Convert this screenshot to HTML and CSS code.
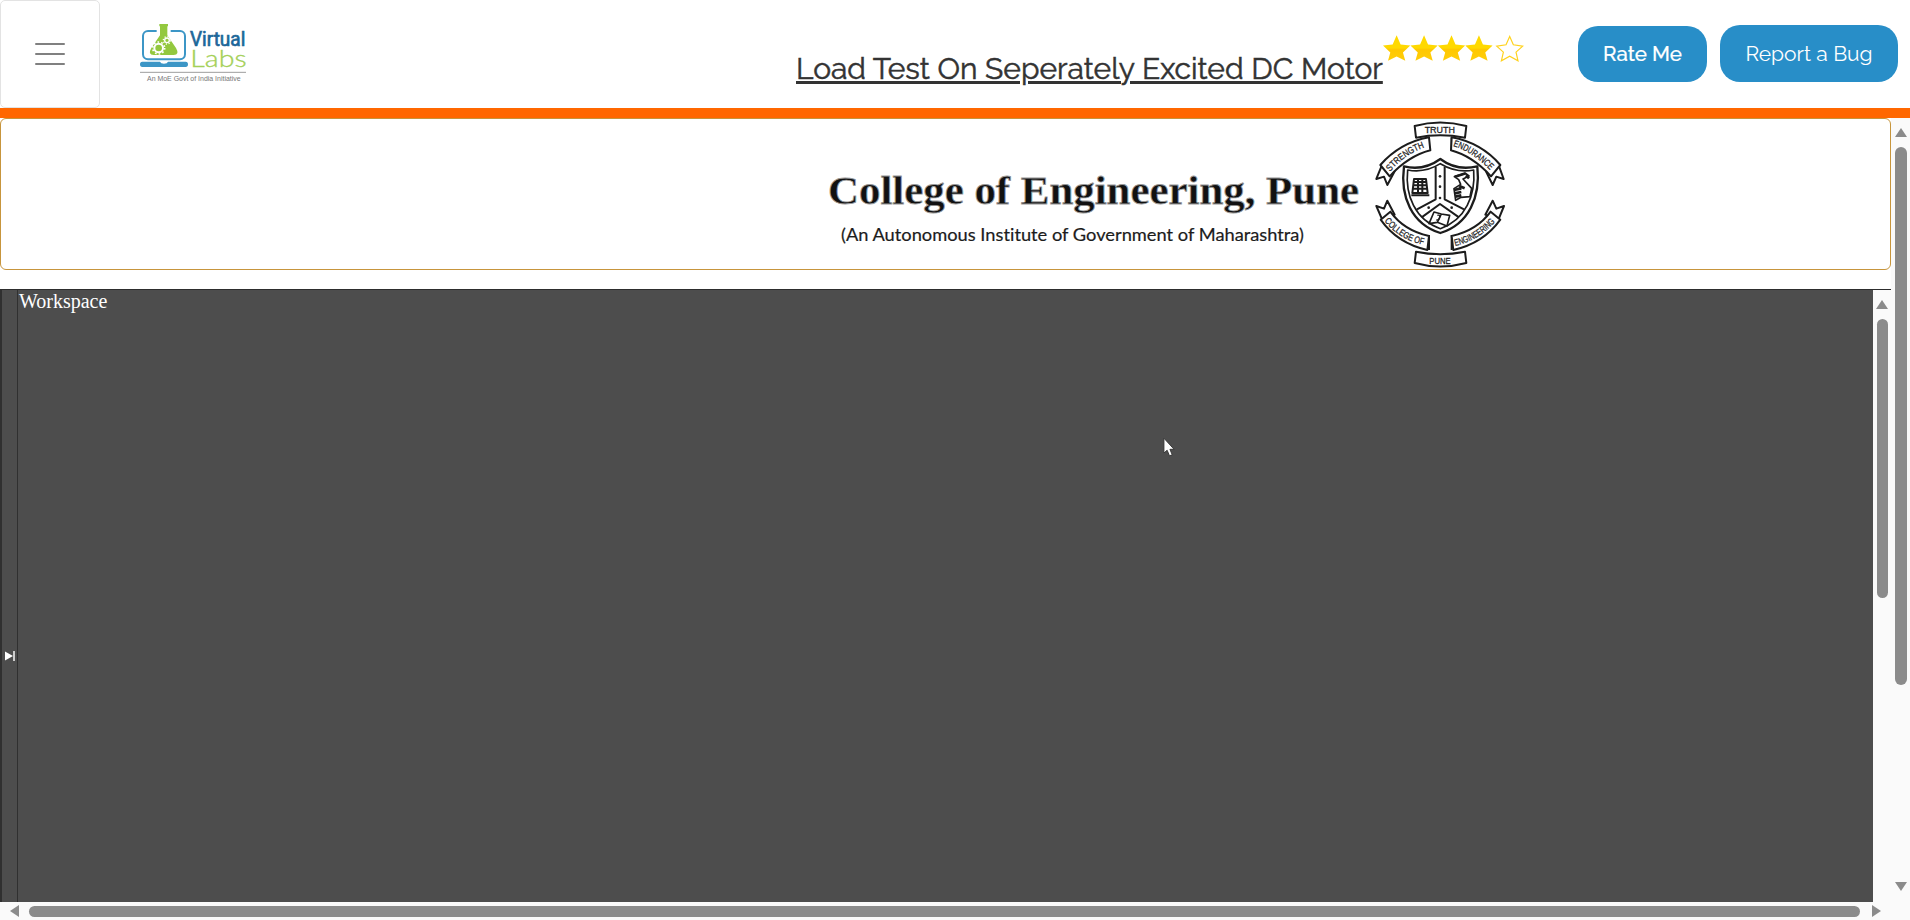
FILE: index.html
```html
<!DOCTYPE html>
<html lang="en">
<head>
<meta charset="utf-8">
<title>Virtual Labs</title>
<link rel="stylesheet" href="styles.css">
</head>
<body>
<header class="header">
  <button class="menu" aria-label="Menu"><span></span><span></span><span></span></button>
  <svg class="logo" viewBox="414 66 330 186">
    <rect x="429" y="93" width="126" height="85" rx="15" fill="none" stroke="#3c96c6" stroke-width="6"/>
    <path d="M470 86h42v16h-42z" fill="#fff"/>
    <path d="M478 72h26v7h-2v27l26 38q12 21-7 21h-60q-19 0-7-21l26-38V79h-2z" fill="#93c83e"/>
    <g fill="none" stroke="#fff">
      <circle cx="476" cy="144" r="13" stroke-width="6"/>
      <circle cx="476" cy="144" r="18" stroke-width="5" stroke-dasharray="5 6.3"/>
      <circle cx="501" cy="121" r="7" stroke-width="4"/>
      <circle cx="501" cy="121" r="11" stroke-width="4" stroke-dasharray="3.5 5.1"/>
    </g>
    <path d="M427 185h53q2 6 12 6t12-6h53q7 0 7 8t-7 8H427q-7 0-7-8t7-8z" fill="#3c96c6"/>
    <text x="570" y="137" class="logo-virtual" textLength="166" lengthAdjust="spacingAndGlyphs">Virtual</text>
    <text x="571" y="200" class="logo-labs" textLength="169" lengthAdjust="spacingAndGlyphs">Labs</text>
    <path d="M420 217h318" stroke="#8a8a8a" stroke-width="2.5"/>
    <text x="441" y="243" class="logo-tag" textLength="281" lengthAdjust="spacingAndGlyphs">An MoE Govt of India Initiative</text>
  </svg>
  <h1 class="title">Load Test On Seperately Excited DC Motor</h1>
  <svg class="stars" viewBox="669 104 424 80">
    <defs>
      <linearGradient id="gold" x2="0" y2="1"><stop offset=".5" stop-color="#ffd900"/><stop offset=".55" stop-color="#ffc800"/><stop offset="1" stop-color="#ffce0a"/></linearGradient>
      <path id="star" d="M0-40 12-12 41-9 19 12 26 37 0 24-26 37-19 12-41-9-12-12z"/>
    </defs>
    <g fill="url(#gold)"><use href="#star" x="710" y="144"/><use href="#star" x="792.5" y="144"/><use href="#star" x="875" y="144"/><use href="#star" x="957.500" y="144"/></g>
    <path d="M1050 108 1061 133 1089 137 1069 155 1075 181 1050 167 1025 181 1031 155 1011 137 1039 133z" fill="#fff" stroke="#ffd21c" stroke-width="3.500"/>
  </svg>
  <button class="pill rate">Rate Me</button>
  <button class="pill report">Report a Bug</button>
</header>
<main class="viewport">
  <div class="content">
    <section class="banner">
      <svg class="college" viewBox="820 119 700 150">
        <text x="828" y="204" class="college-name" textLength="531" lengthAdjust="spacingAndGlyphs">College of Engineering, Pune</text>
        <text x="841" y="241" class="college-sub" textLength="463" lengthAdjust="spacingAndGlyphs">(An Autonomous Institute of Government of Maharashtra)</text>
        <g transform="translate(1360 110) scale(.33333)" fill="#fff" stroke="#1c1c1c" stroke-width="6" stroke-linejoin="round">
          <path d="M207 82v40M275 82v40M207 375v45M275 375v45" fill="none"/>
          <path d="M164 48Q240 27 319 48L315 83Q240 69 168 83z"/>
          <path d="M68 160 49 207 72 200 82 225 104 184zM414 160 431 207 409 200 398 225 378 184z"/>
          <path d="M207 82 211 121Q145 138 89 199L61 165Q120 98 207 82zM275 82 273 121Q337 138 393 199L421 165Q363 98 275 82z"/>
          <path d="M68 332 49 288 72 296 82 272 104 314zM414 332 432 288 409 296 398 272 376 314z"/>
          <path d="M62 329 91 305Q132 362 207 378L202 420Q112 400 62 329zM421 329 392 305Q350 362 275 378L280 420Q370 400 421 329z"/>
          <path d="M168 425Q240 440 315 425L319 459Q240 480 164 459z"/>
          <path d="M241 147Q190 184 132 169C120 260 155 342 241 369C327 342 362 260 352 169Q290 184 241 147z" stroke-width="7"/>
          <path d="M241 161Q195 190 143 180C135 255 165 330 241 356C317 330 347 255 341 180Q290 190 241 161z" stroke-width="5"/>
          <path d="M227 170V268L171 298M254 170V268L312 298M185 322 240 282 297 322" fill="none" stroke-width="6"/>
          <path d="M222 306 244 312 269 316 261 348 232 337 207 341zM244 312 232 337" stroke-width="5"/>
          <path d="M162 207h36l5 42h-46zM154 256h54M162 216h36M162 226h38M160 236h42M174 207v39M187 207v39" stroke-width="6"/>
          <path d="M283 200 317 190 327 198 309 207 335 235 330 260 303 262 287 271 282 236 302 223 296 209z" stroke-width="5"/>
          <path d="M285 200 317 190M282 240 304 235M284 250 304 246M286 260 304 256M318 196 327 205M298 228 314 235" fill="none" stroke-width="8"/>
          <g fill="#222" stroke="none"><circle cx="240" cy="199" r="4"/><circle cx="240" cy="230" r="4"/><circle cx="240" cy="264" r="4"/><circle cx="206" cy="293" r="4"/><circle cx="275" cy="293" r="4"/></g>
          <path d="M232 316q8-3 7 6t-10 8" fill="none" stroke-width="4"/>
        </g>
        <g transform="translate(1360 110) scale(.33333)" class="seal-text">
          <defs>
            <path id="arc-strength" d="M90 185Q140 128 203 109"/>
            <path id="arc-endurance" d="M279 108Q342 128 394 185"/>
            <path id="arc-college" d="M73 333Q123 394 200 406"/>
            <path id="arc-engineering" d="M286 408Q358 391 410 331"/>
          </defs>
          <text x="194" y="69" textLength="91" lengthAdjust="spacingAndGlyphs">TRUTH</text>
          <text x="208" y="461" textLength="64" lengthAdjust="spacingAndGlyphs">PUNE</text>
          <text><textPath href="#arc-strength" textLength="128" lengthAdjust="spacingAndGlyphs">STRENGTH</textPath></text>
          <text><textPath href="#arc-endurance" textLength="134" lengthAdjust="spacingAndGlyphs">ENDURANCE</textPath></text>
          <text><textPath href="#arc-college" textLength="140" lengthAdjust="spacingAndGlyphs">COLLEGE OF</textPath></text>
          <text><textPath href="#arc-engineering" textLength="142" lengthAdjust="spacingAndGlyphs">ENGINEERING</textPath></text>
        </g>
      </svg>
    </section>
    <section class="workbench">
      <div class="drawer"><svg width="11" height="12" viewBox="0 0 11 12"><path d="M0 1.500 8 6 0 10.500z" fill="#fff"/><path d="M8 1h2v10H8z" fill="#ccc"/></svg></div>
      <div class="workspace">Workspace</div>
      <div class="scroll inner"><i class="up"></i><b class="thumb"></b></div>
    </section>
  </div>
  <div class="scroll outer"><i class="up"></i><b class="thumb"></b><i class="down"></i></div>
</main>
<footer class="hscroll"><i class="left"></i><b class="thumb"></b><i class="right"></i></footer>
<svg class="cursor" viewBox="0 0 13 21"><path d="M1 1v16l3.500-3 2.500 6 3-1-2.500-6H12z" fill="#fff" stroke="#333" stroke-width="1"/></svg>
</body>
</html>
```

FILE: styles.css
```css
* { box-sizing: border-box; }
body { margin: 0; width: 1910px; height: 920px; overflow: hidden; display: flex; flex-direction: column; background: #fff; }
svg { display: block; }
button { font: inherit; padding: 0; cursor: pointer; }
.header { height: 118px; flex: none; display: flex; align-items: flex-start; border-bottom: 10px solid #ff6700; font-family: Raleway, Lato, sans-serif; }
.menu { width: 100px; height: 108px; display: flex; flex-direction: column; align-items: center; justify-content: center; gap: 8px; background: #fff; border: 1px solid #e3e3e3; border-radius: 5px; }
.menu span { width: 30px; height: 2px; border-radius: 1px; background: #808080; }
.logo { width: 110px; height: 62px; margin: 22px 0 0 38px; overflow: visible; }
.logo-virtual { font: 400 58px Roboto, sans-serif; fill: #1d6799; stroke: #1d6799; stroke-width: 2px; }
.logo-labs { font: 300 70px Lato, sans-serif; fill: #a4d057; stroke: #a4d057; stroke-width: 1px; }
.logo-tag { font: 22px "Liberation Sans", sans-serif; fill: #777; }
.title { margin: 50px 0 0 548px; width: 586px; font-size: 30px; line-height: 38px; font-weight: 400; color: #333; -webkit-text-stroke: .5px #333; white-space: nowrap; text-decoration: underline; text-decoration-thickness: 3px; text-underline-offset: 2px; }
.stars { width: 141px; height: 27px; margin: 35px 0 0 1px; }
.pill { border: 0; border-radius: 20px; background: #288ec8; color: #fff; font-size: 21px; text-align: center; }
.rate { width: 129px; height: 56px; margin: 26px 0 0 54px; padding-bottom: 1px; font-size: 20.500px; font-weight: 500; -webkit-text-stroke: .2px #fff; }
.report { width: 178px; height: 57px; margin: 25px 0 0 13px; }
.viewport { height: 784px; flex: none; display: flex; }
.content { width: 1891px; display: flex; flex-direction: column; gap: 19px; }
.banner { height: 152px; flex: none; border: 1px solid #c7953c; border-radius: 6px; }
.college { width: 700px; height: 150px; margin-left: 819px; }
.college-name { font: bold 41px "Liberation Serif", serif; fill: #111; stroke: #999; stroke-width: .8px; }
.college-sub { font: 18px Lato, sans-serif; font-variant-ligatures: none; fill: #1c1c1c; stroke: #1c1c1c; stroke-width: .2px; }
.seal-text { font: 28px "Liberation Sans", sans-serif; fill: #222; stroke: #222; stroke-width: .8px; }
.workbench { flex: 1; display: flex; border-top: 1px solid #2d2d2d; background: #4d4d4d; }
.drawer { width: 18px; border-left: 2px solid #303030; border-right: 1px solid #303030; padding: 360px 0 0 3px; }
.workspace { flex: 1; padding: 1px 0 0 1px; color: #fff; font: 20px/20px "Liberation Serif", serif; }
.scroll { display: flex; flex-direction: column; align-items: center; background: #fafafa; }
.inner { width: 18px; padding-top: 10px; }
.outer { width: 19px; padding-top: 10px; }
.thumb { background: #8b8b8b; border-radius: 6px; }
.up, .down { border: 6.500px solid transparent; border-top-width: 0; border-bottom: 9px solid #8b8b8b; }
.down { border-bottom: 0; border-top: 9px solid #8b8b8b; margin-top: 197px; }
.inner .thumb { width: 11px; height: 279px; margin-top: 10px; }
.outer .thumb { width: 12px; height: 538px; margin-top: 10px; }
.hscroll { height: 18px; display: flex; align-items: center; background: #fafafa; }
.hscroll .thumb { width: 1831px; height: 11px; margin: 0 12px 0 10px; }
.left { margin-left: 10px; border: 6px solid transparent; border-left: 0; border-right: 9px solid #8b8b8b; }
.right { border: 6px solid transparent; border-right: 0; border-left: 9px solid #8b8b8b; }
.cursor { position: absolute; left: 1163px; top: 437px; width: 12px; height: 20px; }
```
